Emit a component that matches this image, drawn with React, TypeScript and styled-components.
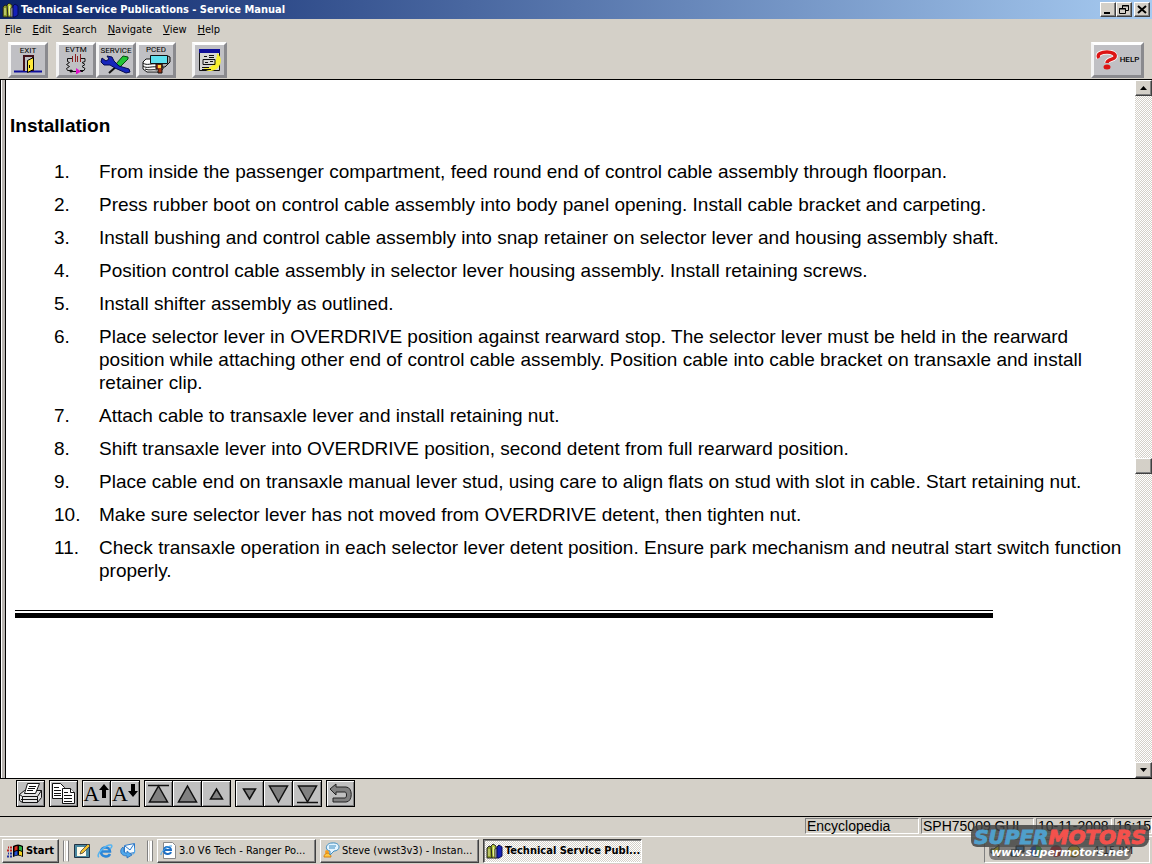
import React from 'react';
import styled, { createGlobalStyle, css } from 'styled-components';

const face = '#d4d0c8';
const uiFont = '"DejaVu Sans Condensed", "DejaVu Sans", sans-serif';
const docFont = '"Liberation Sans", Arial, sans-serif';

const GlobalStyle = createGlobalStyle`
  *, *::before, *::after { box-sizing: border-box; }
  body { margin: 0; background: ${face}; color: #000; font-family: ${uiFont}; font-size: 11px; }
  button { font: inherit; color: inherit; padding: 0; margin: 0; }
  svg { display: block; flex: none; }
`;

const raised = css`
  border: 1px solid;
  border-color: #fff #404040 #404040 #fff;
  box-shadow: inset -1px -1px 0 #808080;
`;

const Window = styled.div`
  position: relative;
  display: flex;
  flex-direction: column;
  min-height: 100vh;
`;

const TitleBar = styled.header`
  display: flex;
  align-items: center;
  height: 19px;
  padding: 0 2px;
  gap: 2px;
  background: linear-gradient(90deg, #0a246a, #a6caf0);
`;

const Title = styled.h1`
  flex: 1;
  margin: 0;
  color: #fff;
  font-size: 11px;
  line-height: 18px;
  font-weight: bold;
  white-space: nowrap;
`;

const CaptionGroup = styled.div`
  display: flex;
`;

const CaptionButton = styled.button`
  ${raised}
  display: grid;
  place-items: center;
  width: 16px;
  height: 15px;
  background: ${face};
`;

const MenuBar = styled.nav`
  display: flex;
  align-items: center;
  gap: 11px;
  height: 21px;
  padding: 0 5px;
`;

const MenuItem = styled.button`
  border: 0;
  background: none;
  line-height: 16px;
  &::first-letter { text-decoration: underline; }
`;

const ToolBar = styled.div`
  display: flex;
  align-items: center;
  justify-content: space-between;
  height: 39px;
  padding: 0 8px;
`;

const ToolGroups = styled.div`
  display: flex;
  gap: 8px;
`;

const ToolGroup = styled.div<{ $apart?: boolean }>`
  display: flex;
  margin-left: ${p => (p.$apart ? 8 : 0)}px;
`;

const ToolButton = styled.button<{ $width: number; $row?: boolean }>`
  display: flex;
  flex-direction: ${p => (p.$row ? 'row' : 'column')};
  align-items: center;
  justify-content: center;
  gap: ${p => (p.$row ? 2 : 0)}px;
  width: ${p => p.$width}px;
  height: 36px;
  border: 3px solid;
  border-color: #fff #8a8a8e #8a8a8e #f4f4f4;
  background: #c0c0c4;
  font-family: Roboto, sans-serif;
  font-size: 8px;
  font-weight: ${p => (p.$row ? 500 : 400)};
  line-height: 9px;
`;

const DocumentFrame = styled.div`
  flex: 1;
  display: flex;
  border-top: 1px solid #000;
  border-bottom: 1px solid #000;
  background: #fff;
`;

const Splitter = styled.div`
  width: 6px;
  border-left: 1px solid #000;
  border-right: 1px solid #000;
  background: linear-gradient(90deg, #fff 1px, #b8b4b0 1px);
`;

const Article = styled.main`
  flex: 1;
  min-width: 0;
  padding: 34px 12px 40px 4px;
  font-family: ${docFont};
  font-size: 19px;
  line-height: 23px;
`;

const Heading = styled.h2`
  margin: 0 0 23px;
  font-size: 19px;
  line-height: 23px;
`;

const Steps = styled.ol`
  display: flex;
  flex-direction: column;
  gap: 10px;
  margin: 0;
  padding: 0 0 0 44px;
  list-style: none;
  counter-reset: step;
`;

const Step = styled.li`
  display: flex;
  counter-increment: step;
  &::before {
    content: counter(step) '.';
    flex: none;
    width: 45px;
  }
`;

const EndRule = styled.hr`
  height: 8px;
  margin: 28px 130px 0 5px;
  border: 0;
  border-top: 1px solid #000;
  border-bottom: 5px solid #000;
`;

const ScrollBar = styled.div`
  display: flex;
  flex-direction: column;
  width: 17px;
  background: repeating-conic-gradient(#fff 0 25%, ${face} 0 50%) 0 0 / 2px 2px;
`;

const ScrollButton = styled.button`
  ${raised}
  display: grid;
  place-items: center;
  height: 16px;
  background: ${face};
`;

const ScrollSpace = styled.div<{ $share: number }>`
  flex: ${p => p.$share};
`;

const Thumb = styled.div`
  ${raised}
  height: 16px;
  background: ${face};
`;

const NavBar = styled.div`
  display: flex;
  gap: 4px;
  height: 38px;
  padding: 1px 16px 0;
  border-bottom: 1px solid #000;
`;

const NavGroup = styled.div`
  display: flex;
`;

const NavButton = styled.button`
  display: grid;
  place-items: center;
  width: 29px;
  height: 27px;
  border: 1px solid #000;
  background: #c0c0c0;
  box-shadow: inset 1px 1px 0 #fff, inset -1px -1px 0 #808080;
  & + & { border-left-width: 0; }
`;

const StatusBar = styled.footer`
  display: flex;
  justify-content: flex-end;
  gap: 2px;
  height: 20px;
  padding: 1px 0 2px;
  border-bottom: 1px solid #fff;
  font-family: ${docFont};
  font-size: 14px;
  line-height: 14px;
`;

const StatusCell = styled.span<{ $width: number }>`
  width: ${p => p.$width}px;
  padding-left: 1px;
  border: 1px solid;
  border-color: #808080 #fff #fff #808080;
  white-space: nowrap;
`;

const TaskBar = styled.div`
  display: flex;
  align-items: center;
  gap: 4px;
  height: 27px;
  padding: 0 2px;
`;

const StartButton = styled.button`
  ${raised}
  display: flex;
  align-items: center;
  justify-content: center;
  gap: 2px;
  width: 57px;
  height: 24px;
  background: ${face};
  font-weight: bold;
`;

const Grip = styled.span`
  width: 6px;
  height: 22px;
  border: 1px solid;
  border-color: transparent #808080 transparent #808080;
  box-shadow: inset 1px 0 0 #fff, inset -2px 0 0 #fff;
`;

const QuickLaunch = styled.div`
  display: flex;
  gap: 7px;
  width: 70px;
  padding-left: 1px;
`;

const QuickButton = styled.button`
  border: 0;
  background: none;
`;

const TaskButton = styled.button<{ $active?: boolean }>`
  ${raised}
  display: flex;
  align-items: center;
  gap: 2px;
  flex: 0 1 159px;
  min-width: 0;
  height: 24px;
  padding: 0 2px;
  background: ${face};
  text-align: left;
  ${p => p.$active && css`
    border-color: #404040 #fff #fff #404040;
    box-shadow: inset 1px 1px 0 #808080;
    background: repeating-conic-gradient(#fff 0 25%, ${face} 0 50%) 0 0 / 2px 2px;
    font-weight: bold;
  `}
`;

const TaskLabel = styled.span`
  white-space: nowrap;
`;

const Tray = styled.div`
  display: flex;
  align-items: center;
  width: 166px;
  height: 24px;
  margin-left: auto;
  padding: 0 16px 0 5px;
  border: 1px solid;
  border-color: #808080 #fff #fff #808080;
`;

const Clock = styled.time`
  margin-left: auto;
  white-space: nowrap;
`;

const Watermark = styled.div`
  position: absolute;
  right: 3px;
  bottom: 4px;
  width: 178px;
  display: flex;
  flex-direction: column;
  align-items: center;
  font-family: "DejaVu Sans", sans-serif;
  font-weight: bold;
  font-style: italic;
  pointer-events: none;
`;

const Brand = styled.span`
  width: 100%;
  height: 22px;
  line-height: 24px;
  border-radius: 8px 6px;
  background: rgba(66, 66, 66, 0.84);
  font-size: 20px;
  text-align: center;
  color: #f4514c;
  -webkit-text-stroke: 1px currentColor;
`;

const BrandStart = styled.span`
  color: #4f9fcb;
`;

const Site = styled.span`
  height: 13px;
  padding: 0 2px;
  line-height: 12px;
  border-radius: 0 0 6px 6px;
  background: rgba(66, 66, 66, 0.6);
  color: #fff;
  font-size: 11px;
`;

const BooksIcon = () => (
  <svg width="17" height="16" viewBox="0 0 17 16" aria-hidden="true">
    <path d="M1 5l2-2 3 1v11H1z" fill="#8a9a28" stroke="#222" />
    <path d="M5 3l2-2 3 2v12H6z" fill="#b4c83c" stroke="#222" />
    <path d="M9 6l2-1v10H9z" fill="#ddd" stroke="#333" />
    <path d="M11 4l2-2 3 2v9l-3 2h-2z" fill="#1420b8" stroke="#050a50" />
    <path d="M3 6v7M7.500 4v9" stroke="#e8eca0" />
  </svg>
);

const ExitIcon = () => (
  <svg width="30" height="19" viewBox="0 0 30 19" aria-hidden="true">
    <path d="M1 16.500h28" stroke="#10109a" strokeWidth="2" />
    <path d="M11 16V1h9v15" fill="#c0c0c4" stroke="#401018" strokeWidth="2" />
    <path d="M14.500 5.500l6-3v12l-6 3z" fill="#ffe83a" stroke="#000" />
    <path d="M16.500 10v3" stroke="#000" />
  </svg>
);

const CircuitIcon = () => (
  <svg width="26" height="20" viewBox="0 0 26 20" aria-hidden="true">
    <path d="M9 4.500H4.500v3l2 1-3 2 3 2-3 2 1 2h5M17 4.500h5v3l-3 1 3 2-3 2 3 2-1 2h-4" fill="none" stroke="#111" />
    <path d="M9.500 2v6M12.500 0v8M14.500 2v6M17.500 0v8" stroke="#8c2020" />
    <path d="M8 17.500h12" stroke="#111" />
    <path d="M13 14l5 3.500-5 3z" fill="#e010c8" />
    <circle cx="8" cy="17" r="1.500" fill="#111" />
  </svg>
);

const WrenchIcon = () => (
  <svg width="32" height="19" viewBox="0 0 32 19" aria-hidden="true">
    <path d="M9 18l9-8" stroke="#111" strokeWidth="2" />
    <path d="M16 9l7-8 5 1v2l-8 8z" fill="#22c435" stroke="#084a10" />
    <path d="M2 3l4 3 3-2-2-3 5 1 2 4 5 5 10 3 1 3-4 1-11-5-5-3H4L1 7z" fill="#1626bc" stroke="#040a50" />
  </svg>
);

const PcedIcon = () => (
  <svg width="30" height="20" viewBox="0 0 30 20" aria-hidden="true">
    <path d="M9 5H5L2 8v7l4 3h11l5-3V7z" fill="#fff" stroke="#111" />
    <path d="M2 9c4 3 8 0 14 1M2 12c4 3 8 0 14 1M4 15c4 2 8 0 12 1" fill="none" stroke="#111" />
    <path d="M27 2l2 1v5l-5 5h-3v-3" fill="#aaa" stroke="#111" />
    <path d="M9.500 1.500h17v8h-17z" fill="#5fe0ee" stroke="#111" />
    <path d="M15 10h6v9h-4v-4h-2z" fill="#a03414" stroke="#111" />
    <path d="M17 11h3v3h-3z" fill="#ffd23a" />
  </svg>
);

const NoteIcon = () => (
  <svg width="26" height="26" viewBox="0 0 26 26" aria-hidden="true">
    <path d="M2.500 2.500h20v21h-20z" fill="#d8d8d4" stroke="#111" />
    <path d="M20 6c7 5 4 17-6 18-5 0-7-2-8-4 8 3 14-4 14-14z" fill="#f8f030" />
    <path d="M2 2h21v4H2z" fill="#10109a" />
    <path d="M7 9.500h3M12 8.500h5M12 10.500h5M6 17.500h12v-5H6zM8 15.500h3M13 14.500h3M5 20.500h7M5 22.500h9" fill="none" stroke="#111" />
  </svg>
);

const HelpIcon = () => (
  <svg width="22" height="20" viewBox="0 0 22 20" aria-hidden="true" fill="none">
    <path d="M3 8C0 4 6 2 11 2c5 0 9 2 8 5-1 3-8 2-8 6" stroke="#fff" strokeWidth="5" />
    <path d="M3 8C0 4 6 2 11 2c5 0 9 2 8 5-1 3-8 2-8 6" stroke="#dc1414" strokeWidth="3.500" />
    <ellipse cx="11" cy="17" rx="3.500" ry="2.500" fill="#dc1414" />
  </svg>
);

const PrinterIcon = () => (
  <svg width="25" height="23" viewBox="0 0 25 23" aria-hidden="true" fill="#e4e4e4" stroke="#111">
    <path d="M1.500 12.500l5-4h17v7l-4 5h-15l-3-2z" />
    <path d="M1.500 12.500l3 2h15l4-6M19.500 14.500v6M4.500 14.500v6M3 17.500h16" fill="none" />
    <path d="M6.500 11.500l3-10h12l-4 10z" fill="#fff" />
    <path d="M11 4.500h7M10 6.500h7M9 8.500h6" />
  </svg>
);

const CopyIcon = () => (
  <svg width="25" height="23" viewBox="0 0 25 23" aria-hidden="true" fill="#fff" stroke="#111">
    <path d="M1.500 1.500h8l4 4v11h-12z" />
    <path d="M3 5.500h5M3 8.500h7M3 11.500h7M3 13.500h7" />
    <path d="M11.500 6.500h8l4 4v11h-12z" />
    <path d="M19.500 6.500v4h4M13 10.500h4M13 13.500h8M13 16.500h8M13 19.500h8" />
  </svg>
);

const Letter = styled.span`
  font-family: "Liberation Serif", serif;
  font-size: 22px;
  line-height: 26px;
  height: 25px;
`;

const SizeFace = styled.span`
  display: flex;
  align-items: flex-start;
`;

const SizeArrow = ({ down }: { down?: boolean }) => (
  <svg width="10" height="19" viewBox="0 0 10 19" aria-hidden="true">
    {down ? <path d="M3 3h4v7h3l-5 6-5-6h3z" /> : <path d="M5 3l5 6H7v8H3V9H0z" />}
  </svg>
);

const Triangle = ({ size, down, bar }: { size: number; down?: boolean; bar?: boolean }) => {
  const h = Math.round(size * 0.45);
  const w = Math.round(size * 0.5);
  const tip = down ? 12 + h : 12 - h;
  const base = down ? 12 - h : 12 + h;
  return (
    <svg width="25" height="23" viewBox="0 0 25 23" aria-hidden="true">
      <path d={`M12.500 ${tip}L${12.5 + w} ${base}H${12.5 - w}z`} fill="#808080" stroke="#111" strokeWidth="1.500" />
      {bar && <path d={down ? 'M2 20.500h21' : 'M2 3.500h21'} stroke="#111" strokeWidth="1.500" />}
    </svg>
  );
};

const BackIcon = () => (
  <svg width="25" height="23" viewBox="0 0 25 23" aria-hidden="true">
    <path d="M2 7l6-5v3h10c7 0 7 15 0 15H5v-4h12c2 0 2-6 0-6H8v3z" fill="#808080" stroke="#222" />
  </svg>
);

const FlagIcon = () => (
  <svg width="17" height="14" viewBox="0 0 17 14" aria-hidden="true">
    <path d="M6 2q5-3 10 0v11q-5-3-10 0z" fill="#000" />
    <path d="M7.500 3q1.500-1 3-1v4q-1.500 0-3 1z" fill="#e03020" />
    <path d="M12 2q1.500 0 3 1v4q-1.500-1-3-1z" fill="#28b040" />
    <path d="M7.500 8q1.500-1 3-1v4q-1.500 0-3 1z" fill="#2450d8" />
    <path d="M12 7q1.500 0 3 1v4q-1.500-1-3-1z" fill="#f0d020" />
    <path d="M1 3.500h1M3 3.500h2M0 6.500h2M3 6.500h2" stroke="#c02020" strokeWidth="2" />
    <path d="M1 9.500h1M3 9.500h2M0 12.500h2M3 12.500h2" stroke="#2030a0" strokeWidth="2" />
  </svg>
);

const DesktopIcon = () => (
  <svg width="16" height="16" viewBox="0 0 16 16" aria-hidden="true">
    <path d="M.5 1.500h15v13H.5z" fill="#4a88a0" stroke="#234" />
    <path d="M3 4h9v9H3z" fill="#fffbe8" />
    <path d="M6 11l1-3 7-7 2 2-7 7z" fill="#f2c030" stroke="#333" strokeWidth="0.700" />
  </svg>
);

const BrowserIcon = () => (
  <svg width="16" height="16" viewBox="0 0 16 16" aria-hidden="true" fill="none">
    <path d="M13 11c-2 4-9 3-9-2.500S13 3 13 8.500H5" stroke="#2c86d8" strokeWidth="2.500" />
    <path d="M2 14C-2 12 9 1 14 2c2 1 0 3-1 4" stroke="#58b4f0" strokeWidth="1.500" />
  </svg>
);

const MailIcon = () => (
  <svg width="16" height="16" viewBox="0 0 16 16" aria-hidden="true">
    <path d="M4.500 2.500l10-2v9l-10 2z" fill="#f4faff" stroke="#2c78c8" />
    <path d="M5 3l5 4 4-6" fill="none" stroke="#2c78c8" />
    <path d="M3 4C-1 7 0 13 7 13v2l5-3-5-4v2C4 10 3 8 4 6z" fill="#50a8ec" stroke="#1c64b4" strokeWidth="0.700" />
    <path d="M12 12c4-1 4-5 2-8v5z" fill="#50a8ec" />
  </svg>
);

const PageIcon = () => (
  <svg width="17" height="17" viewBox="0 0 17 17" aria-hidden="true" fill="none">
    <path d="M3.500.5h9l3 3v13h-12z" fill="#fff" stroke="#888" />
    <path d="M11 10c-1 3-7 3-7-1.500S11 4 11 8H5" stroke="#1f6fc4" strokeWidth="2" />
    <path d="M1 13C0 11 7 3 12 4" stroke="#4ea8e8" />
  </svg>
);

const ChatIcon = () => (
  <svg width="17" height="17" viewBox="0 0 17 17" aria-hidden="true">
    <circle cx="4" cy="10" r="2" fill="#f6a020" />
    <path d="M1 15c0-5 7-5 7 0z" fill="#ffc840" stroke="#d88010" />
    <path d="M9 1c9-1 9 8 2 8l-4 4V9C1 8 3 1 9 1z" fill="#e4f4ff" stroke="#3c8cc0" />
    <path d="M6 4h7M6 6h6" stroke="#3c8cc0" />
  </svg>
);

const TrayIcons = () => (
  <svg width="100" height="16" viewBox="0 0 100 16" aria-hidden="true">
    <path d="M1 6h3l5-4v12l-5-4H1z" fill="#c8c020" stroke="#222" />
    <path d="M26 3h8v6h-8zM21 7h8v6h-8z" fill="#3878b0" stroke="#111" />
    <circle cx="46" cy="8" r="6" fill="#2454b8" />
    <path d="M46 2a6 6 0 010 12z" fill="#3ca848" />
    <circle cx="66" cy="8" r="6" fill="#b02830" />
    <circle cx="84" cy="8" r="6" fill="#d8b828" stroke="#554400" />
  </svg>
);

const steps = [
  'From inside the passenger compartment, feed round end of control cable assembly through floorpan.',
  'Press rubber boot on control cable assembly into body panel opening. Install cable bracket and carpeting.',
  'Install bushing and control cable assembly into snap retainer on selector lever and housing assembly shaft.',
  'Position control cable assembly in selector lever housing assembly. Install retaining screws.',
  'Install shifter assembly as outlined.',
  'Place selector lever in OVERDRIVE position against rearward stop. The selector lever must be held in the rearward position while attaching other end of control cable assembly. Position cable into cable bracket on transaxle and install retainer clip.',
  'Attach cable to transaxle lever and install retaining nut.',
  'Shift transaxle lever into OVERDRIVE position, second detent from full rearward position.',
  'Place cable end on transaxle manual lever stud, using care to align flats on stud with slot in cable. Start retaining nut.',
  'Make sure selector lever has not moved from OVERDRIVE detent, then tighten nut.',
  'Check transaxle operation in each selector lever detent position. Ensure park mechanism and neutral start switch function properly.',
];

const menus = ['File', 'Edit', 'Search', 'Navigate', 'View', 'Help'];

export default function App() {
  return (
    <Window>
      <GlobalStyle />
      <TitleBar>
        <BooksIcon />
        <Title>Technical Service Publications - Service Manual</Title>
        <CaptionGroup>
          <CaptionButton aria-label="Minimize">
            <svg width="10" height="9" viewBox="0 0 10 9"><path d="M1 8h6" stroke="#000" strokeWidth="2" /></svg>
          </CaptionButton>
          <CaptionButton aria-label="Restore">
            <svg width="10" height="9" viewBox="0 0 10 9" fill="none" stroke="#000">
              <path d="M3.500 3V.5h6v5H7M3 1h7M.5 3.500h6v5h-6zM0 4h7" />
            </svg>
          </CaptionButton>
        </CaptionGroup>
        <CaptionButton aria-label="Close">
          <svg width="10" height="9" viewBox="0 0 10 9"><path d="M1 1l8 7M9 1L1 8" stroke="#000" strokeWidth="2" /></svg>
        </CaptionButton>
      </TitleBar>
      <MenuBar>
        {menus.map(m => <MenuItem key={m}>{m}</MenuItem>)}
      </MenuBar>
      <ToolBar>
        <ToolGroups>
          <ToolGroup><ToolButton $width={40}>EXIT<ExitIcon /></ToolButton></ToolGroup>
          <ToolGroup>
            <ToolButton $width={40}>EVTM<CircuitIcon /></ToolButton>
            <ToolButton $width={40}>SERVICE<WrenchIcon /></ToolButton>
            <ToolButton $width={40}>PCED<PcedIcon /></ToolButton>
          </ToolGroup>
          <ToolGroup $apart><ToolButton $width={35} aria-label="Notes"><NoteIcon /></ToolButton></ToolGroup>
        </ToolGroups>
        <ToolButton $width={53} $row><HelpIcon />HELP</ToolButton>
      </ToolBar>
      <DocumentFrame>
        <Splitter />
        <Article>
          <Heading>Installation</Heading>
          <Steps>
            {steps.map(s => <Step key={s}><span>{s}</span></Step>)}
          </Steps>
          <EndRule />
        </Article>
        <ScrollBar>
          <ScrollButton aria-label="Scroll up">
            <svg width="7" height="4" viewBox="0 0 7 4"><path d="M0 4l3.500-4L7 4z" /></svg>
          </ScrollButton>
          <ScrollSpace $share={362} />
          <Thumb />
          <ScrollSpace $share={288} />
          <ScrollButton aria-label="Scroll down">
            <svg width="7" height="4" viewBox="0 0 7 4"><path d="M0 0l3.500 4L7 0z" /></svg>
          </ScrollButton>
        </ScrollBar>
      </DocumentFrame>
      <NavBar>
        <NavGroup><NavButton aria-label="Print"><PrinterIcon /></NavButton></NavGroup>
        <NavGroup><NavButton aria-label="Copy"><CopyIcon /></NavButton></NavGroup>
        <NavGroup>
          <NavButton aria-label="Larger text"><SizeFace><Letter>A</Letter><SizeArrow /></SizeFace></NavButton>
          <NavButton aria-label="Smaller text"><SizeFace><Letter>A</Letter><SizeArrow down /></SizeFace></NavButton>
        </NavGroup>
        <NavGroup>
          <NavButton aria-label="First section"><Triangle size={18} bar /></NavButton>
          <NavButton aria-label="Previous section"><Triangle size={17} /></NavButton>
          <NavButton aria-label="Previous page"><Triangle size={11} /></NavButton>
        </NavGroup>
        <NavGroup>
          <NavButton aria-label="Next page"><Triangle size={11} down /></NavButton>
          <NavButton aria-label="Next section"><Triangle size={17} down /></NavButton>
          <NavButton aria-label="Last section"><Triangle size={18} down bar /></NavButton>
        </NavGroup>
        <NavGroup><NavButton aria-label="Back"><BackIcon /></NavButton></NavGroup>
      </NavBar>
      <StatusBar>
        <StatusCell $width={114}>Encyclopedia</StatusCell>
        <StatusCell $width={113}>SPH75009.GUI</StatusCell>
        <StatusCell $width={76}>10-11-2008</StatusCell>
        <StatusCell $width={38}>16:15</StatusCell>
      </StatusBar>
      <TaskBar>
        <StartButton><FlagIcon />Start</StartButton>
        <Grip />
        <QuickLaunch>
          <QuickButton aria-label="Show desktop"><DesktopIcon /></QuickButton>
          <QuickButton aria-label="Browser"><BrowserIcon /></QuickButton>
          <QuickButton aria-label="Mail"><MailIcon /></QuickButton>
        </QuickLaunch>
        <Grip />
        <TaskButton><PageIcon /><TaskLabel>3.0 V6 Tech - Ranger Po...</TaskLabel></TaskButton>
        <TaskButton><ChatIcon /><TaskLabel>Steve (vwst3v3) - Instan...</TaskLabel></TaskButton>
        <TaskButton $active><BooksIcon /><TaskLabel>Technical Service Publ...</TaskLabel></TaskButton>
        <Tray><TrayIcons /><Clock>4:15 PM</Clock></Tray>
      </TaskBar>
      <Watermark>
        <Brand><BrandStart>SUPER</BrandStart>MOTORS</Brand>
        <Site>www.supermotors.net</Site>
      </Watermark>
    </Window>
  );
}
